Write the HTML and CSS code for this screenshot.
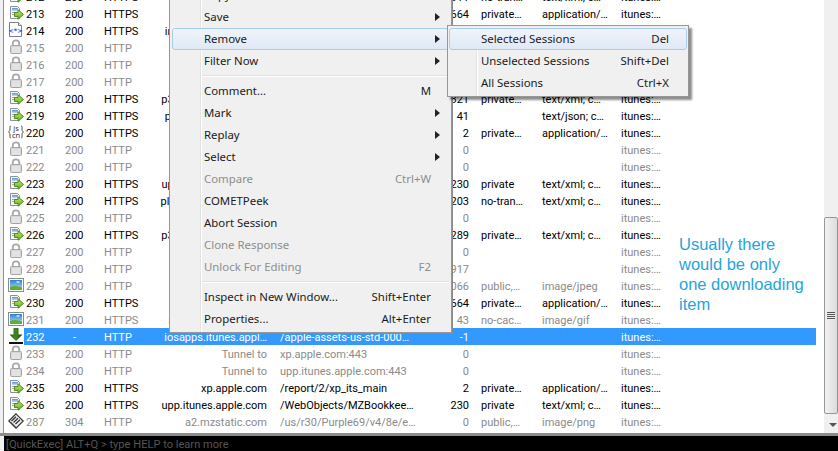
FILE: index.html
```html
<!DOCTYPE html>
<html lang="en">
<head>
<meta charset="utf-8">
<title>Fiddler sessions</title>
<link rel="stylesheet" href="styles.css">
</head>
<body>
<svg class="defs" width="0" height="0" aria-hidden="true">
  <defs>
    <linearGradient id="gPage" x1="0" y1="0" x2="0" y2="1"><stop offset="0" stop-color="#4f92d6"/><stop offset="1" stop-color="#cfdcec"/></linearGradient>
    <linearGradient id="gArrow" x1="0" y1="0" x2="0" y2="1"><stop offset="0" stop-color="#c4e96e"/><stop offset="1" stop-color="#5fae1e"/></linearGradient>
    <linearGradient id="gSky" x1="0" y1="0" x2="0" y2="1"><stop offset="0" stop-color="#2b83d8"/><stop offset="1" stop-color="#b8e0f5"/></linearGradient>
    <linearGradient id="gDown" x1="0" y1="0" x2="1" y2="0"><stop offset="0" stop-color="#1f5c10"/><stop offset=".5" stop-color="#3f8a1e"/><stop offset="1" stop-color="#103a08"/></linearGradient>
    <symbol id="i-arrow" viewBox="0 0 16 16">
      <path d="M2.500 1.500h7l2 2v10h-9z" fill="#f7f7fa" stroke="#8c8f9a"/>
      <rect x="4" y="3" width="6" height="3" fill="url(#gPage)"/>
      <rect x="4" y="7" width="3" height="1" fill="#8fa7c4"/>
      <rect x="4" y="9" width="3" height="1" fill="#c5a98a"/>
      <path d="M6.500 7.500h3.500V4.800l5.500 4.700-5.500 4.700v-2.700H6.500z" fill="url(#gArrow)" stroke="#4f8a1a"/>
    </symbol>
    <symbol id="i-lock" viewBox="0 0 16 16">
      <path d="M4.800 7V4.500a3.200 3.200 0 0 1 6.400 0V7" fill="none" stroke="#a9a9a9" stroke-width="1.800"/>
      <rect x="2.500" y="6.500" width="11" height="8" rx="1" fill="#d6d6d6" stroke="#a6a6a6"/>
      <path d="M4 9h8M4 11h8M4 13h8" stroke="#efefef"/>
    </symbol>
    <symbol id="i-img" viewBox="0 0 16 16">
      <rect x=".5" y="1.500" width="15" height="13" fill="#fff" stroke="#8b8b8b"/>
      <rect x="2" y="3" width="12" height="10" fill="url(#gSky)"/>
      <path d="M2 10c3-1.500 6-1.500 12 .5V13H2z" fill="#5fb02e"/>
      <path d="M8 5c1-1 3-1 4 0-1 1-3 1-4 0z" fill="#fff"/>
    </symbol>
    <symbol id="i-xml" viewBox="0 0 16 16">
      <path d="M1.500.500h9l3 3v11h-12z" fill="#fff" stroke="#7b7f8a"/>
      <path d="M10.500.500v3h3" fill="#e8e8ee" stroke="#7b7f8a"/>
      <text x="7.500" y="10.500" class="ico-xml">&lt;*&gt;</text>
    </symbol>
    <symbol id="i-js" viewBox="0 0 16 16">
      <path d="M3 2C1.500 2 2 3 2 5S1.500 7.500.500 8C1.500 8.500 2 9 2 11s-.5 3 1 3M13 2c1.500 0 1 1 1 3s.5 2.500 1.500 3c-1 .5-1.500 1-1.500 3s.5 3-1 3" fill="none" stroke="#555"/>
      <text x="8" y="7" class="ico-js">js</text>
      <text x="8" y="14" class="ico-js">cn</text>
    </symbol>
    <symbol id="i-down" viewBox="0 0 16 16">
      <path d="M5.500 0h5v6.500H14.500L8 13 1.500 6.500H5.500z" fill="url(#gDown)"/>
      <rect x="1" y="14" width="14" height="2" fill="#111"/>
    </symbol>
    <symbol id="i-bin" viewBox="0 0 16 16">
      <path d="M8 .800 15.200 8 8 15.200.800 8z" fill="#f2f2f2" stroke="#333" stroke-width="1.200"/>
      <path d="M3.500 8 8 3.800M5.500 9.500 10 5.300M7.500 11l4.500-4.200" stroke="#333" stroke-width="1.300"/>
      <path d="M3 9l5 4.800" stroke="#777"/>
    </symbol>
  </defs>
</svg>

<div class="app">
  <div class="main">
    <div class="strip"></div>
    <div class="sessions">
      <div class="row"><svg class="ico"><use href="#i-arrow"/></svg><div class="cells"><span>212</span><span>200</span><span>HTTPS</span><span class="host">xp.apple.com</span><span class="url">/WebObjects</span><span class="num">311</span><span class="cache">no-tran…</span><span>text/xml; c…</span><span>itunes:…</span></div></div>
      <div class="row"><svg class="ico"><use href="#i-arrow"/></svg><div class="cells"><span>213</span><span>200</span><span>HTTPS</span><span class="host">xp.apple.com</span><span class="url">/report/2/xp_its_main</span><span class="num">664</span><span class="cache">private…</span><span>application/…</span><span>itunes:…</span></div></div>
      <div class="row"><svg class="ico"><use href="#i-xml"/></svg><div class="cells"><span>214</span><span>200</span><span>HTTPS</span><span class="host">init.itunes.apple.com</span><span class="url">/WebObjects</span><span class="num">41</span><span class="cache"></span><span>text/json; c…</span><span>itunes:…</span></div></div>
      <div class="row off"><svg class="ico"><use href="#i-lock"/></svg><div class="cells"><span>215</span><span>200</span><span>HTTP</span><span class="host">Tunnel to</span><span class="url">xp.apple.com:443</span><span class="num">0</span><span class="cache"></span><span></span><span>itunes:…</span></div></div>
      <div class="row off"><svg class="ico"><use href="#i-lock"/></svg><div class="cells"><span>216</span><span>200</span><span>HTTP</span><span class="host">Tunnel to</span><span class="url">xp.apple.com:443</span><span class="num">0</span><span class="cache"></span><span></span><span>itunes:…</span></div></div>
      <div class="row off"><svg class="ico"><use href="#i-lock"/></svg><div class="cells"><span>217</span><span>200</span><span>HTTP</span><span class="host">Tunnel to</span><span class="url">xp.apple.com:443</span><span class="num">0</span><span class="cache"></span><span></span><span>itunes:…</span></div></div>
      <div class="row"><svg class="ico"><use href="#i-arrow"/></svg><div class="cells"><span>218</span><span>200</span><span>HTTPS</span><span class="host">p37.itunes.apple.com</span><span class="url">/WebObjects</span><span class="num">321</span><span class="cache">private…</span><span>text/xml; c…</span><span>itunes:…</span></div></div>
      <div class="row"><svg class="ico"><use href="#i-arrow"/></svg><div class="cells"><span>219</span><span>200</span><span>HTTPS</span><span class="host">pdl.itunes.apple.com</span><span class="url">/WebObjects</span><span class="num">41</span><span class="cache"></span><span>text/json; c…</span><span>itunes:…</span></div></div>
      <div class="row"><svg class="ico"><use href="#i-js"/></svg><div class="cells"><span>220</span><span>200</span><span>HTTPS</span><span class="host">xp.apple.com</span><span class="url">/report/2/xp_its_main</span><span class="num">2</span><span class="cache">private…</span><span>application/…</span><span>itunes:…</span></div></div>
      <div class="row off"><svg class="ico"><use href="#i-lock"/></svg><div class="cells"><span>221</span><span>200</span><span>HTTP</span><span class="host">Tunnel to</span><span class="url">xp.apple.com:443</span><span class="num">0</span><span class="cache"></span><span></span><span>itunes:…</span></div></div>
      <div class="row off"><svg class="ico"><use href="#i-lock"/></svg><div class="cells"><span>222</span><span>200</span><span>HTTP</span><span class="host">Tunnel to</span><span class="url">xp.apple.com:443</span><span class="num">0</span><span class="cache"></span><span></span><span>itunes:…</span></div></div>
      <div class="row"><svg class="ico"><use href="#i-arrow"/></svg><div class="cells"><span>223</span><span>200</span><span>HTTPS</span><span class="host">upp.itunes.apple.com</span><span class="url">/WebObjects</span><span class="num">230</span><span class="cache">private</span><span>text/xml; c…</span><span>itunes:…</span></div></div>
      <div class="row"><svg class="ico"><use href="#i-arrow"/></svg><div class="cells"><span>224</span><span>200</span><span>HTTPS</span><span class="host">play.itunes.apple.com</span><span class="url">/WebObjects</span><span class="num">203</span><span class="cache">no-tran…</span><span>text/xml; c…</span><span>itunes:…</span></div></div>
      <div class="row off"><svg class="ico"><use href="#i-lock"/></svg><div class="cells"><span>225</span><span>200</span><span>HTTP</span><span class="host">Tunnel to</span><span class="url">xp.apple.com:443</span><span class="num">0</span><span class="cache"></span><span></span><span>itunes:…</span></div></div>
      <div class="row"><svg class="ico"><use href="#i-arrow"/></svg><div class="cells"><span>226</span><span>200</span><span>HTTPS</span><span class="host">p37.itunes.apple.com</span><span class="url">/WebObjects</span><span class="num">289</span><span class="cache">private…</span><span>text/xml; c…</span><span>itunes:…</span></div></div>
      <div class="row off"><svg class="ico"><use href="#i-lock"/></svg><div class="cells"><span>227</span><span>200</span><span>HTTP</span><span class="host">Tunnel to</span><span class="url">xp.apple.com:443</span><span class="num">0</span><span class="cache"></span><span></span><span>itunes:…</span></div></div>
      <div class="row off"><svg class="ico"><use href="#i-lock"/></svg><div class="cells"><span>228</span><span>200</span><span>HTTP</span><span class="host">Tunnel to</span><span class="url">xp.apple.com:443</span><span class="num">917</span><span class="cache"></span><span></span><span>itunes:…</span></div></div>
      <div class="row off"><svg class="ico"><use href="#i-img"/></svg><div class="cells"><span>229</span><span>200</span><span>HTTP</span><span class="host">a2.mzstatic.com</span><span class="url">/us/r30/Purple</span><span class="num">066</span><span class="cache">public,…</span><span>image/jpeg</span><span>itunes:…</span></div></div>
      <div class="row"><svg class="ico"><use href="#i-arrow"/></svg><div class="cells"><span>230</span><span>200</span><span>HTTPS</span><span class="host">xp.apple.com</span><span class="url">/report/2/xp_its_main</span><span class="num">664</span><span class="cache">private…</span><span>application/…</span><span>itunes:…</span></div></div>
      <div class="row off"><svg class="ico"><use href="#i-img"/></svg><div class="cells"><span>231</span><span>200</span><span>HTTPS</span><span class="host">se.itunes.apple.com</span><span class="url">/images/spacer.gif</span><span class="num">43</span><span class="cache">no-cac…</span><span>image/gif</span><span>itunes:…</span></div></div>
      <div class="row sel"><svg class="ico"><use href="#i-down"/></svg><div class="cells"><span>232</span><span class="dash">-</span><span>HTTP</span><span class="host">iosapps.itunes.appl…</span><span class="url">/apple-assets-us-std-000…</span><span class="num">-1</span><span class="cache"></span><span></span><span>itunes:…</span></div></div>
      <div class="row off"><svg class="ico"><use href="#i-lock"/></svg><div class="cells"><span>233</span><span>200</span><span>HTTP</span><span class="host">Tunnel to</span><span class="url">xp.apple.com:443</span><span class="num">0</span><span class="cache"></span><span></span><span>itunes:…</span></div></div>
      <div class="row off"><svg class="ico"><use href="#i-lock"/></svg><div class="cells"><span>234</span><span>200</span><span>HTTP</span><span class="host">Tunnel to</span><span class="url">upp.itunes.apple.com:443</span><span class="num">0</span><span class="cache"></span><span></span><span>itunes:…</span></div></div>
      <div class="row"><svg class="ico"><use href="#i-arrow"/></svg><div class="cells"><span>235</span><span>200</span><span>HTTPS</span><span class="host">xp.apple.com</span><span class="url">/report/2/xp_its_main</span><span class="num">2</span><span class="cache">private…</span><span>application/…</span><span>itunes:…</span></div></div>
      <div class="row"><svg class="ico"><use href="#i-arrow"/></svg><div class="cells"><span>236</span><span>200</span><span>HTTPS</span><span class="host">upp.itunes.apple.com</span><span class="url">/WebObjects/MZBookkee…</span><span class="num">230</span><span class="cache">private</span><span>text/xml; c…</span><span>itunes:…</span></div></div>
      <div class="row off"><svg class="ico"><use href="#i-bin"/></svg><div class="cells"><span>287</span><span>304</span><span>HTTP</span><span class="host">a2.mzstatic.com</span><span class="url">/us/r30/Purple69/v4/8e/e…</span><span class="num">0</span><span class="cache">public,…</span><span>image/png</span><span>itunes:…</span></div></div>
    </div>
    <div class="scrollbar">
      <div class="thumb"><span class="grip"></span></div>
      <div class="scroll-down"></div>
    </div>
  </div>
  <div class="quick"><span class="quick-strip"></span><div class="quick-text">[QuickExec] ALT+Q &gt; type HELP to learn more</div></div>

  <div class="note">Usually there<br>would be only<br>one downloading<br>item</div>

  <div class="menu">
    <div class="mi">Copy<i class="arr"></i></div>
    <div class="mi">Save<i class="arr"></i></div>
    <div class="mi hover">Remove<i class="arr"></i></div>
    <div class="mi">Filter Now<i class="arr"></i></div>
    <div class="sep"></div>
    <div class="mi">Comment...<b>M</b></div>
    <div class="mi">Mark<i class="arr"></i></div>
    <div class="mi">Replay<i class="arr"></i></div>
    <div class="mi">Select<i class="arr"></i></div>
    <div class="mi dis">Compare<b>Ctrl+W</b></div>
    <div class="mi">COMETPeek</div>
    <div class="mi">Abort Session</div>
    <div class="mi dis">Clone Response</div>
    <div class="mi dis">Unlock For Editing<b>F2</b></div>
    <div class="sep"></div>
    <div class="mi">Inspect in New Window...<b>Shift+Enter</b></div>
    <div class="mi">Properties...<b>Alt+Enter</b></div>
  </div>
  <div class="submenu">
    <div class="mi hover">Selected Sessions<b>Del</b></div>
    <div class="mi">Unselected Sessions<b>Shift+Del</b></div>
    <div class="mi">All Sessions<b>Ctrl+X</b></div>
  </div>
</div>
</body>
</html>
```

FILE: styles.css
```css
* { box-sizing: border-box; }
html, body { margin: 0; padding: 0; }
body { width: 838px; height: 451px; overflow: hidden; background: #fff; }
.defs { position: absolute; }

.app { position: relative; width: 838px; height: 451px; display: flex; flex-direction: column; overflow: hidden; }
.main { flex: 0 0 436px; display: flex; overflow: hidden; border-bottom: 3px solid #8c8c8c; }

.strip { flex: 0 0 4px; background: #f0f0f0; border-right: 1px solid #8f8f8f; }

.sessions { flex: 0 0 820px; margin-top: -12px; font: 11px/19px Roboto, sans-serif; color: #000; }
.row { display: flex; height: 17px; white-space: nowrap; }
.ico { flex: 0 0 16px; width: 16px; height: 16px; margin-left: 4px; display: block; }
.cells { flex: 0 0 792px; display: grid; grid-template-columns: 39px 39px 48px 115px 173px 29px 73px 79px 1fr; padding-left: 2px; }
.host { justify-self: end; }
.url { padding-left: 13px; }
.num { text-align: right; }
.cache { padding-left: 12px; }
.dash { padding-left: 8px; }
.off { color: #8a8a8a; }
.sel { color: #fff; }
.sel .cells { background: #3399ff; }
.ico-xml { font: 700 6.500px "DejaVu Sans", sans-serif; fill: #1a4fd8; text-anchor: middle; }
.ico-js { font: 7.500px "Noto Sans", sans-serif; fill: #333; text-anchor: middle; }

.scrollbar { flex: 0 0 14px; background: #f0f0f0; display: flex; flex-direction: column; justify-content: flex-end; }
.thumb { height: 197px; margin-bottom: 19px; background: linear-gradient(to right, #f2f2f2, #dcdcdc); border: 1px solid #979797; border-radius: 2px; display: flex; align-items: center; justify-content: center; }
.grip { width: 8px; height: 8px; background: repeating-linear-gradient(to bottom, #555 0 1px, #eee 1px 2px); }
.scroll-down { position: absolute; left: 829px; top: 423px; border: 4px solid transparent; border-top-color: #555; border-bottom: 0; }

.quick { flex: 1; display: flex; background: #000; }
.quick-strip { flex: 0 0 4px; background: #f0f0f0; }
.quick-text { padding-left: 2px; font: 11.100px/17px Roboto, sans-serif; color: #555; }

.note { position: absolute; left: 679px; top: 234px; font: 16.500px/20px "Liberation Sans", sans-serif; color: #1fa5db; }

.menu, .submenu { position: absolute; background: #f0f0f0; font: 11.400px/22px "Noto Sans", sans-serif; color: #1a1a1a; }
.menu::before, .submenu::before { content: ""; position: absolute; top: 0; bottom: 0; width: 1px; background: #e2e3e3; box-shadow: 1px 0 0 #fff; }
.menu { left: 169px; top: -17px; width: 283px; padding: 1px 2px 2px; border: 1px solid #979797; border-top: 0; box-shadow: 1px 1px 0 #8a8a8a; }
.menu::before { left: 30px; }
.submenu { left: 447px; top: 25px; width: 242px; height: 72px; padding: 2px 1px; border: 1px solid #979797; box-shadow: 3px 3px 2px rgba(0,0,0,.45); }
.submenu::before { left: 28px; }
.mi { position: relative; height: 22px; padding-left: 32px; display: flex; justify-content: space-between; white-space: nowrap; }
.submenu .mi { padding-left: 32px; }
.mi b { font-weight: 400; padding-right: 18px; }
.dis { color: #8d8d8d; }
.hover { background: linear-gradient(to bottom, #f0f4fa, #dfe9f6); border: 1px solid #a9cdf2; border-radius: 3px; padding-left: 31px; line-height: 20px; }
.submenu .hover { padding-left: 31px; }
.hover b { padding-right: 17px; }
.arr { position: absolute; right: 9px; top: 7px; border: 4px solid transparent; border-left: 5px solid #222; border-right: 0; }
.hover .arr { right: 8px; top: 6px; }
.sep { height: 2px; margin: 3px 0 3px 29px; background: #e0e0e0; border-bottom: 1px solid #fff; }
```
